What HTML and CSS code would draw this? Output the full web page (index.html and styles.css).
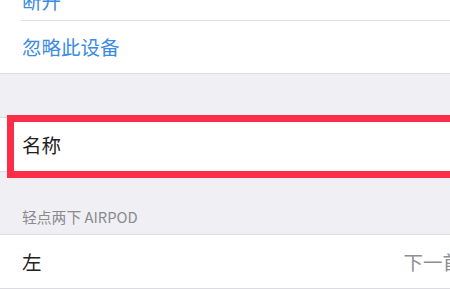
FILE: index.html
```html
<!DOCTYPE html>
<html lang="zh">
<head>
<meta charset="utf-8">
<link rel="stylesheet" href="styles.css">
</head>
<body>
<div class="page">
  <div class="group group-top">
    <div class="row row-first"><span class="action">断开</span></div>
    <div class="row row-sep"><span class="action">忽略此设备</span></div>
  </div>
  <div class="gap"></div>
  <div class="group group-name">
    <div class="row"><span class="label">名称</span></div>
    <div class="highlight"></div>
  </div>
  <div class="section-header">轻点两下 AIRPOD</div>
  <div class="group">
    <div class="row row-wide">
      <span class="label">左</span>
      <span class="value">下一首</span>
    </div>
  </div>
</div>
</body>
</html>
```

FILE: styles.css
```css
html, body {
  margin: 0;
  padding: 0;
  background: #efeff4;
}
body {
  font-family: "Noto Sans CJK SC", "Noto Sans", sans-serif;
}
.page {
  width: 100%;
  height: 289px;
  overflow: hidden;
  display: flex;
  flex-direction: column;
}
.group {
  background: #ffffff;
  border-top: 1px solid #dcdce0;
  border-bottom: 1px solid #dcdce0;
  position: relative;
  flex: none;
}
.group-top {
  border-top: none;
  margin-top: -33px;
}
.row {
  height: 53px;
  display: flex;
  align-items: center;
  padding-left: 22px;
  font-size: 19.5px;
  line-height: 1;
  position: relative;
}
.row-first {
  padding-top: 14px;
  box-sizing: border-box;
}
.row-sep::before {
  content: "";
  position: absolute;
  left: 21px;
  right: 0;
  top: 0;
  border-top: 1px solid #e2e2e6;
}
.row-wide {
  margin-right: -12px;
}
.action {
  color: #3a8be3;
}
.label {
  color: #222222;
}
.value {
  margin-left: auto;
  color: #8e8e93;
  white-space: nowrap;
}
.gap {
  height: 43px;
  flex: none;
}
.highlight {
  position: absolute;
  left: 7px;
  right: 0;
  top: -3px;
  bottom: -7px;
  border: 7.5px solid #fb2d47;
  border-right: none;
}
.section-header {
  height: 62px;
  flex: none;
  box-sizing: border-box;
  padding: 0 22px 8px;
  display: flex;
  align-items: flex-end;
  font-size: 14.8px;
  line-height: 1.2;
  color: #8a8a8f;
}
```
